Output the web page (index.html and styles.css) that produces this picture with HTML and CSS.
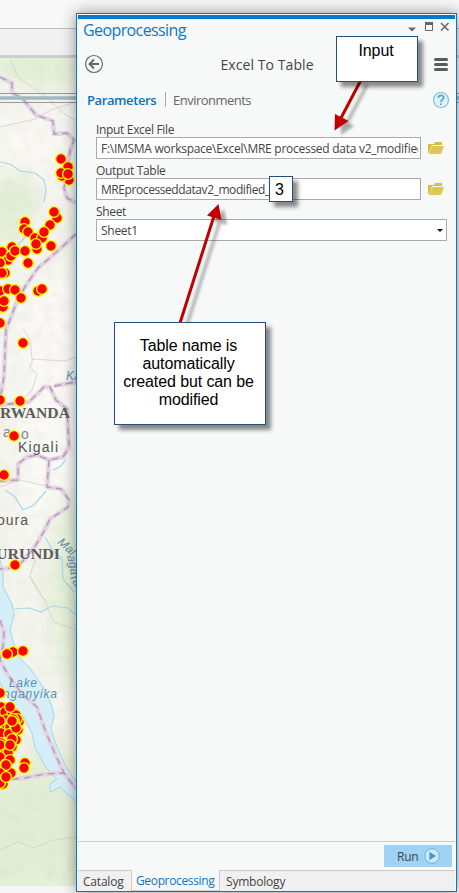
FILE: index.html
```html
<!DOCTYPE html>
<html lang="en">
<head>
<meta charset="utf-8">
<title>Geoprocessing</title>
<link rel="stylesheet" href="styles.css">
</head>
<body>
<div class="desktop">
  <div class="ribbon"></div>
  <div class="ribbon-lower"></div>
  <svg class="map" width="459" height="828" viewBox="0 58 459 828">
    <defs>
      <filter id="relief" x="0" y="0" width="1" height="1"><feTurbulence type="fractalNoise" baseFrequency=".09" numOctaves="4" seed="8"/><feColorMatrix values="0 0 0 0 .58  0 0 0 0 .62  0 0 0 0 .52  .9 0 0 0 -.34"/></filter>
      <filter id="soft"><feGaussianBlur stdDeviation="10"/></filter>
    </defs>
    <rect y="58" width="459" height="828" fill="#f5f5ef"/>
    <g filter="url(#soft)">
      <path fill="#e3efd5" d="M-20 50H80V83L35 90 0 75ZM-20 195 30 160 40 200 25 235 0 250ZM45 580 65 500 90 470V700L60 670ZM30 750 60 735 95 800V890H-20V800Z"/>
      <path fill="#faf9f5" d="M0 110 55 130 65 180 0 170ZM20 300 80 260V480L20 550Z"/>
    </g>
    <rect y="58" width="80" height="828" filter="url(#relief)" opacity=".4"/>
    <path fill="#d6eef8" stroke="#a6d4e8" d="M-2 553 3 570 3 587 12 604 14 615 10 630 17 655 30 668 43 687 52 706 54 716 51 728 55 742 65 765 72 776 80 787V805L65 792 60 787 50 792 50 784 57 779 47 769 40 756 35 748 32 733 23 716 13 705 4 691-2 678Z"/>
    <g fill="none" stroke="#a5d8eb" stroke-width="1.2">
      <path d="M0 162 10 164 20 171 35 173 44 180 46 190 44 202M5 490 15 497 23 510 34 505 46 491M14 609 29 608 41 612 52 606 68 608 76 615M45 537 53 551 62 558 63 579 74 592M53 470 61 466 66 459M25 237 15 249 0 256"/>
    </g>
    <g fill="none" stroke="#d3cfd1" stroke-width=".8">
      <path d="M10 58 18 77 46 97 66 115 76 121M0 127 35 119 51 110 76 102M23 329 30 340 32 359 65 361 76 357M33 359 30 367 37 374 32 390 18 406M0 487 20 480 46 486M29 576 38 591 48 603M44 600 54 622 76 630M35 560 30 576 44 600M0 850 18 842 34 848 50 841 76 837"/>
    </g>
    <path fill="none" stroke="#e3d3e3" stroke-width="4.500" stroke-linejoin="round" d="M0 77 12 83 12 93 22 98 36 115 53 121 54 134 67 133 74 140 70 151 64 188 67 198 76 203M76 234 60 249 38 268 26 285 16 304 6 330 4 376 0 400 0 405 29 402 44 387 50 387 56 400 67 409 69 447 63 457 49 460 37 455 27 457 18 464 18 480 0 481M49 460 47 487 61 489 69 500 68 507 50 519 43 533 34 548 23 561 14 568 0 569M54 386 76 382M0 620 4 632 3 646 0 660 8 675 22 694 37 707 45 730 56 756 64 773 76 789M0 780 25 778 45 774 64 773"/>
    <path fill="none" stroke="#b09aae" stroke-width="1.300" stroke-dasharray="7 5" d="M0 77 12 83 12 93 22 98 36 115 53 121 54 134 67 133 74 140 70 151 64 188 67 198 76 203M76 234 60 249 38 268 26 285 16 304 6 330 4 376 0 400 0 405 29 402 44 387 50 387 56 400 67 409 69 447 63 457 49 460 37 455 27 457 18 464 18 480 0 481M49 460 47 487 61 489 69 500 68 507 50 519 43 533 34 548 23 561 14 568 0 569M54 386 76 382M0 620 4 632 3 646 0 660 8 675 22 694 37 707 45 730 56 756 64 773 76 789M0 780 25 778 45 774 64 773"/>
    <path stroke="#9a9a9a" d="M0 93.500H459M0 102.500H459"/>
    <path stroke="#a1b9c3" stroke-width="3.500" d="M0 98H459"/>
    <g class="place">
      <text class="country" x="0" y="418" textLength="70" lengthAdjust="spacingAndGlyphs">RWANDA</text>
      <text class="country" x="-4" y="559" textLength="64" lengthAdjust="spacingAndGlyphs">URUNDI</text>
      <text x="18" y="452" textLength="40">Kigali</text>
      <text x="-3" y="525" textLength="31">oura</text>
      <text class="faded" x="3" y="437">a</text><text class="faded" x="21" y="439">o</text>
    </g>
    <g class="water">
      <text x="9" y="687" textLength="28">Lake</text>
      <text x="3" y="698" textLength="54">nganyika</text>
      <text x="66" y="380">Ka</text>
      <text transform="translate(57 543) rotate(42)">Mal</text>
      <text transform="translate(67 556) rotate(78)">aga</text>
      <text transform="translate(70 578) rotate(60)">ra</text>
    </g>
    <g id="sites" class="sites"></g>
  </svg>
  <div class="status-strip"></div>

  <main class="panel">
    <div class="accent"></div>
    <header class="titlebar">
      <h1>Geoprocessing</h1>
      <svg width="46" height="14" viewBox="0 0 46 14" fill="none" stroke="#666">
        <path fill="#666" stroke="none" d="M3 8.500H11L7 12.500Z"/>
        <path d="M20.500 4.500H27.500V11.500H20.500Z"/><path stroke-width="3" d="M20 4.500H28"/>
        <path stroke-width="1.500" d="M36 4 43.500 11.500M43.500 4 36 11.500"/>
      </svg>
    </header>
    <div class="tool">
      <svg class="back" width="20" height="20" viewBox="0 0 20 20" fill="none" stroke="#666"><circle cx="10" cy="10" r="8.500" stroke-width="1.200"/><path stroke-width="1.800" d="M15 10H6M10 5.500 5.500 10 10 14.500"/></svg>
      <h2>Excel To Table</h2>
      <svg class="menu" width="14" height="13" viewBox="0 0 14 13"><path stroke="#5b5b5b" stroke-width="3" stroke-linecap="round" d="M1.500 1.500H12.500M1.500 6.500H12.500M1.500 11.500H12.500"/></svg>
    </div>
    <nav class="views">
      <b>Parameters</b><i></i><span>Environments</span>
      <svg width="18" height="18" viewBox="0 0 18 18" fill="none"><circle cx="9" cy="9" r="7.500" fill="#e3f2fb" stroke="#7ebde3" stroke-width="1.200"/><path stroke="#58a8d8" stroke-width="1.800" d="M6.300 7C6.300 3.500 11.700 3.500 11.700 6.800 11.700 8.600 9 8.600 9 11M9 12.300V14"/></svg>
    </nav>
    <section class="form">
      <label>Input Excel File</label>
      <div class="field"><div class="box"><span class="v-path">F:\IMSMA workspace\Excel\MRE processed data v2_modified</span></div>
        <svg class="folder" width="17" height="13" viewBox="0 0 17 13"><path fill="#d8bd42" d="M0 2H6L7 0H14V3H4L1 11H0Z"/><path fill="#e0c655" d="M4 4H16L13 12H1Z"/></svg></div>
      <label>Output Table</label>
      <div class="field"><div class="box"><span class="v-table">MREprocesseddatav2_modified_</span></div>
        <svg class="folder" width="17" height="13" viewBox="0 0 17 13"><path fill="#d8bd42" d="M0 2H6L7 0H14V3H4L1 11H0Z"/><path fill="#e0c655" d="M4 4H16L13 12H1Z"/></svg></div>
      <label>Sheet</label>
      <div class="field"><div class="box select"><span class="v-sheet">Sheet1</span><svg width="6" height="3" viewBox="0 0 6 3"><path d="M0 0H6L3 3Z"/></svg></div></div>
    </section>
    <footer class="actions">
      <div class="run"><span>Run</span><svg width="16" height="16" viewBox="0 0 16 16"><circle cx="8" cy="8" r="7.300" fill="#cce8f8" stroke="#65b2df"/><path fill="#3e9ad2" d="M5.500 4 12 8 5.500 12Z"/></svg></div>
    </footer>
    <div class="tabs"><div class="tab t-cat"><span>Catalog</span></div><div class="tab active"><span>Geoprocessing</span></div><div class="tab t-sym"><span>Symbology</span></div></div>
  </main>

  <svg class="arrows" width="459" height="893" viewBox="0 0 459 893">
    <defs><filter id="arrow-shadow" x="-.5" y="-.5" width="2" height="2"><feGaussianBlur stdDeviation="1.700"/></filter></defs>
    <g transform="translate(6 5)" opacity=".4" filter="url(#arrow-shadow)"><path stroke="#333" stroke-width="3" d="M361 80 341 118M180 323 214 216"/><path fill="#333" d="M335 130 335 113 348 121ZM218 204 207 216 221 220Z"/></g>
    <path stroke="#c00000" stroke-width="3" d="M361 80 341 118M180 323 214 216"/>
    <path fill="#c00000" d="M334.500 130.500 335 114 348.500 121ZM218.500 204 207 215.500 221.500 220Z"/>
  </svg>
  <div class="callout c-input">Input</div>
  <div class="callout c-number">3</div>
  <div class="callout c-table">Table name is<br>automatically<br>created but can be<br>modified</div>
</div>
<script src="sites.js"></script>
</body>
</html>
```
FILE: styles.css
```css
* { box-sizing: border-box; }
body { margin: 0; font-family: "Open Sans", "Noto Sans", sans-serif; font-size: 12px; color: #444; }
h1, h2 { margin: 0; font-weight: 400; }
svg { display: block; flex: none; }
.desktop { position: relative; width: 459px; height: 893px; overflow: hidden; background: #f5f5f5; display: flex; flex-direction: column; }
.ribbon { height: 29px; flex: none; background: #f8f8f8; border-bottom: 1px solid #bcbcbc; }
.ribbon-lower { height: 29px; flex: none; background: #f1f1f1; border-bottom: 3px solid #cdcdcd; }
.map { height: 828px; }
.status-strip { flex: 1; background: #f5f6f5; }
.place { font: 14px "Liberation Sans", sans-serif; fill: #555; }
.country { font: bold 15px "Liberation Serif", serif; fill: #5c5c5c; }
.faded { fill: #888; }
.water { font: italic 12px "Liberation Sans", sans-serif; fill: #5b93b1; }
.sites { fill: #f00; stroke: #ff0; stroke-width: 1.4px; }

.panel { position: absolute; left: 76px; top: 13px; width: 381px; height: 879px; display: flex; flex-direction: column; padding: 1px 1px 0; border: 1px solid #0078d0; background: #f7f9f8; box-shadow: 0 0 14px rgba(0,0,0,.42); }
.accent { height: 4px; flex: none; background: #0079cf; }
.titlebar { height: 23px; flex: none; display: flex; justify-content: space-between; padding: 0 4px 0 5px; }
.titlebar h1 { font-size: 16px; line-height: 22px; color: #0b78ca; letter-spacing: -.6px; }
.tool { height: 44px; flex: none; display: grid; grid-template-columns: 30px 1fr 30px; align-items: center; padding: 0 7px 0 6px; }
.tool h2 { font-size: 14px; text-align: center; letter-spacing: .08px; line-height: 20px; padding-left: 2px; padding-top: 2px; }
.menu { justify-self: end; }
.views { height: 27px; flex: none; display: flex; align-items: center; padding: 0 5px 0 9px; font-size: 13px; }
.views b { width: 69px; color: #0972bd; font-weight: 600; white-space: nowrap; letter-spacing: -.4px; }
.views i { width: 1px; height: 15px; background: #aaa; margin: 0 7px 0 9px; }
.views span { color: #666; white-space: nowrap; letter-spacing: -.52px; }
.views svg { margin-left: auto; }
.form { flex: 1; padding: 9px 8px 0 18px; }
.form label { display: block; height: 15px; line-height: 16px; white-space: nowrap; letter-spacing: -.33px; }
.field { height: 22px; margin-bottom: 4px; display: flex; align-items: center; gap: 7px; }
.box { width: 325px; height: 22px; flex: none; background: #fff; border: 1px solid #aaa; padding: 0 2px 0 4px; line-height: 21px; white-space: nowrap; }
.box span { display: block; overflow: hidden; letter-spacing: -.27px; }
.box .v-table { letter-spacing: -.42px; }
.select { width: 351px; display: flex; align-items: center; justify-content: space-between; }
.select svg { fill: #111; margin-right: 1px; }
.actions { height: 29px; flex: none; border-top: 1px solid #ccc; padding: 3px 3px 0 0; display: flex; justify-content: flex-end; }
.run { width: 68px; height: 22px; display: flex; align-items: center; justify-content: space-between; padding: 0 12px 0 13px; background: #a0d3f3; letter-spacing: -.2px; }
.tabs { height: 21px; flex: none; display: flex; background: #f0f0f0; }
.tab { border-top: 1px solid #ccc; padding-left: 5px; line-height: 21px; white-space: nowrap; letter-spacing: -.2px; }
.t-cat { width: 53px; }
.active { width: 89px; border: 1px solid #ccc; border-top: 0; padding-left: 4px; background: #f7f9f8; color: #1473c3; line-height: 22px; letter-spacing: -.35px; }
.t-sym { flex: 1; padding-left: 6px; }

.arrows { position: absolute; left: 0; top: 0; }
.callout { position: absolute; border: 1px solid #244d80; background: #fff; color: #000; font: 16px/18px "Liberation Sans", sans-serif; text-align: center; box-shadow: 5px 5px 4px rgba(0,0,0,.45); letter-spacing: -.1px; }
.c-input { left: 336px; top: 36px; width: 82px; height: 46px; padding: 5px 2px 0 0; }
.c-number { left: 269px; top: 176px; width: 24px; height: 26px; padding: 4px 3px 0 0; }
.c-table { left: 114px; top: 322px; width: 152px; height: 103px; padding: 14px 3px 0 0; }
```
FILE: sites.js
```js
const sites = [
  [61,159],[68,167],[69,180],[62,176],[61,173],[68,174],
  [57,218],[54,212],[25,222],[24,229],[28,232],[50,225],[35,238],[42,238],[44,232],[37,249],[36,244],[51,246],
  [12,247],[2,252],[8,260],[11,256],[15,251],[25,251],[28,263],[0,263],[5,273],[2,273],
  [0,291],[8,289],[15,290],[38,291],[42,289],[21,298],[3,307],[4,301],[0,323],[23,343],[0,400],[20,401],
  [14,436],[4,475],[15,565],[13,652],[7,654],[23,651],[0,693],
  [1,707],[5,712],[12,715],[16,715],[6,720],[19,722],[17,719],[14,721],[4,728],[10,727],[1,733],[18,730],[15,728],[9,734],
  [1,743],[16,740],[12,739],[5,749],[12,747],[8,753],[0,757],[6,764],[10,760],[2,769],[11,773],[3,784],[0,783],
  [10,707],[13,719],[0,721],[16,728],[12,721],[0,745],[10,745],[6,765],[0,773],[6,777],[25,763],[24,768]
];
const layer = document.getElementById("sites");
for (const [x, y] of sites) {
  const dot = document.createElementNS("http://www.w3.org/2000/svg", "circle");
  dot.setAttribute("cx", x);
  dot.setAttribute("cy", y);
  dot.setAttribute("r", 5.4);
  layer.append(dot);
}
```
